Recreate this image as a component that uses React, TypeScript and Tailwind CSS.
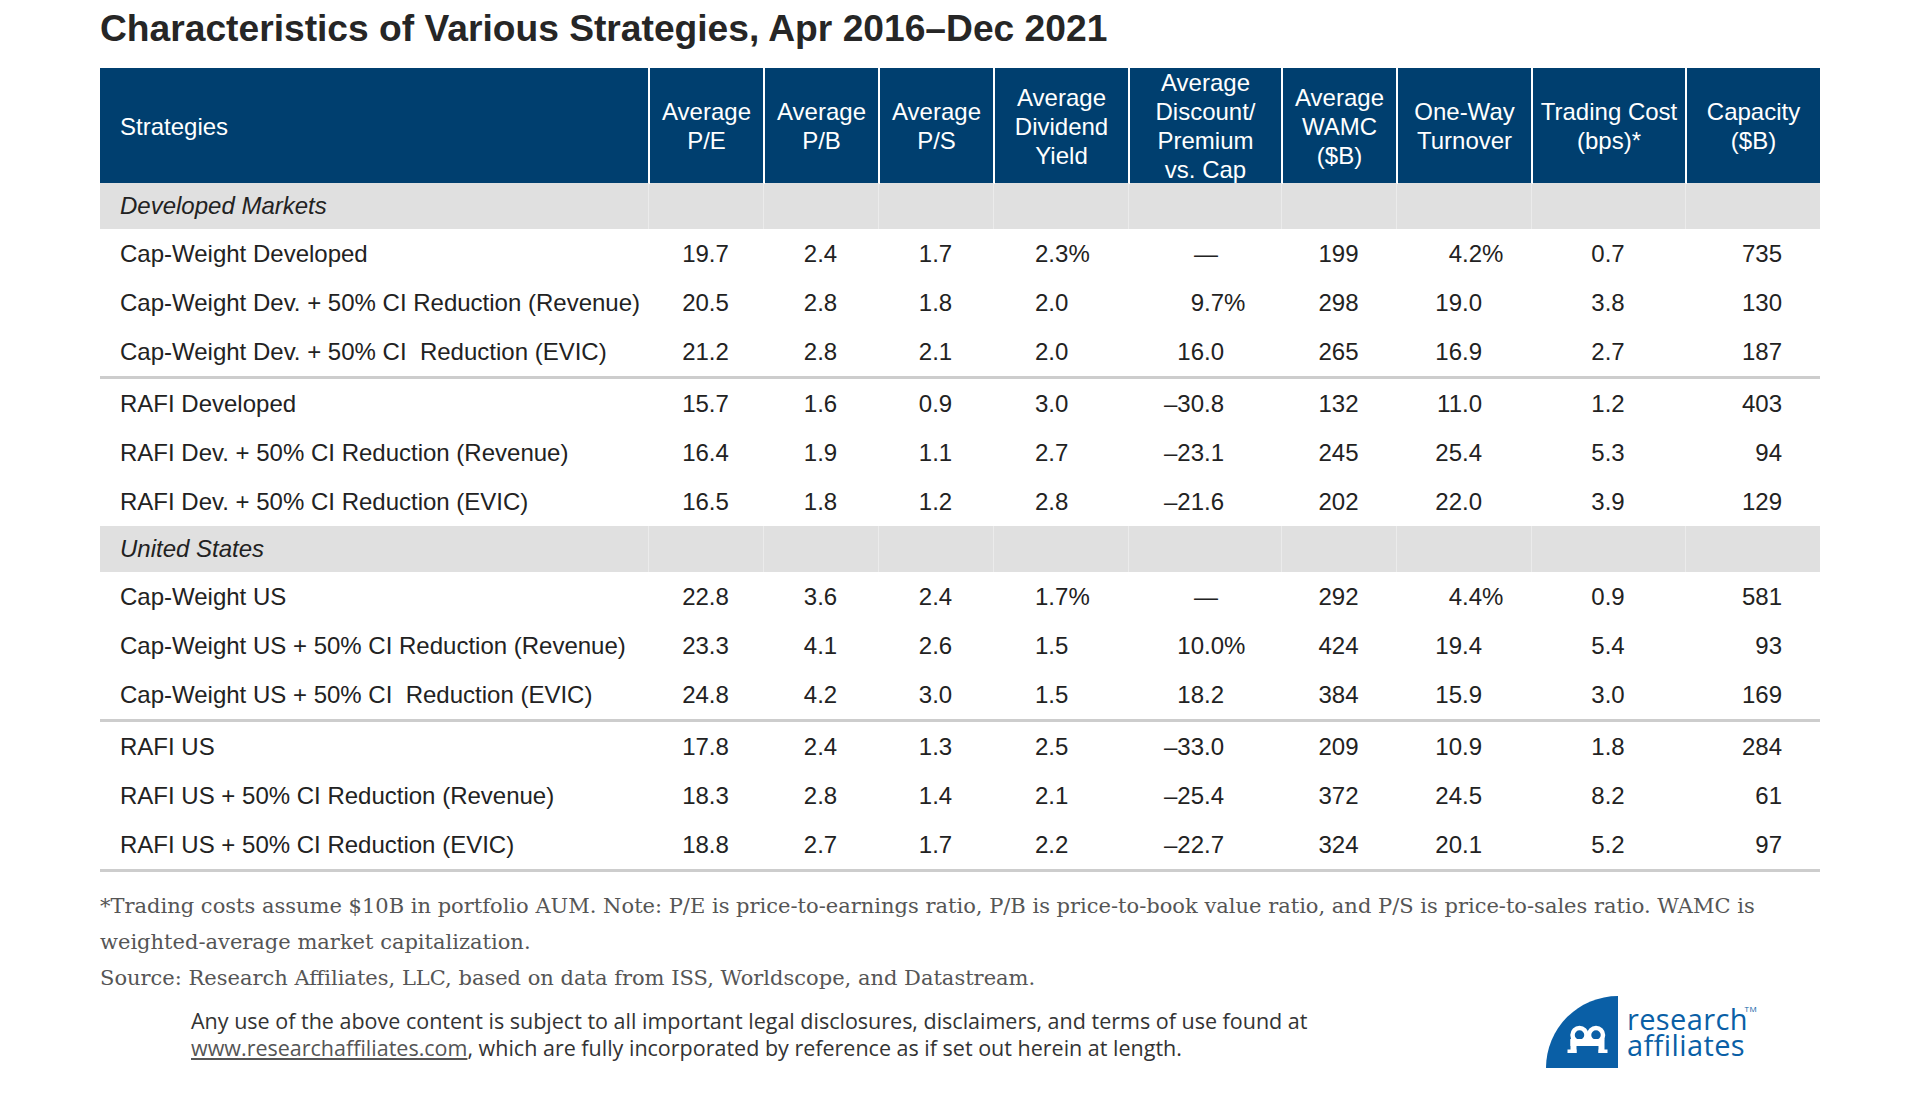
import React from "react";

type Row = string[];

const groups: { section: string; blocks: Row[][] }[] = [
  {
    section: "Developed Markets",
    blocks: [
      [
        ["Cap-Weight Developed", "19.7", "2.4", "1.7", "2.3%", "—", "199", "4.2%", "0.7", "735"],
        ["Cap-Weight Dev. + 50% CI Reduction (Revenue)", "20.5", "2.8", "1.8", "2.0", "9.7%", "298", "19.0", "3.8", "130"],
        ["Cap-Weight Dev. + 50% CI\u00a0 Reduction (EVIC)", "21.2", "2.8", "2.1", "2.0", "16.0", "265", "16.9", "2.7", "187"],
      ],
      [
        ["RAFI Developed", "15.7", "1.6", "0.9", "3.0", "–30.8", "132", "11.0", "1.2", "403"],
        ["RAFI Dev. + 50% CI Reduction (Revenue)", "16.4", "1.9", "1.1", "2.7", "–23.1", "245", "25.4", "5.3", "94"],
        ["RAFI Dev. + 50% CI Reduction (EVIC)", "16.5", "1.8", "1.2", "2.8", "–21.6", "202", "22.0", "3.9", "129"],
      ],
    ],
  },
  {
    section: "United States",
    blocks: [
      [
        ["Cap-Weight US", "22.8", "3.6", "2.4", "1.7%", "—", "292", "4.4%", "0.9", "581"],
        ["Cap-Weight US + 50% CI Reduction (Revenue)", "23.3", "4.1", "2.6", "1.5", "10.0%", "424", "19.4", "5.4", "93"],
        ["Cap-Weight US + 50% CI\u00a0 Reduction (EVIC)", "24.8", "4.2", "3.0", "1.5", "18.2", "384", "15.9", "3.0", "169"],
      ],
      [
        ["RAFI US", "17.8", "2.4", "1.3", "2.5", "–33.0", "209", "10.9", "1.8", "284"],
        ["RAFI US + 50% CI Reduction (Revenue)", "18.3", "2.8", "1.4", "2.1", "–25.4", "372", "24.5", "8.2", "61"],
        ["RAFI US + 50% CI Reduction (EVIC)", "18.8", "2.7", "1.7", "2.2", "–22.7", "324", "20.1", "5.2", "97"],
      ],
    ],
  },
];

const headers: string[][] = [
  ["Average", "P/E"],
  ["Average", "P/B"],
  ["Average", "P/S"],
  ["Average", "Dividend", "Yield"],
  ["Average", "Discount/", "Premium", "vs. Cap"],
  ["Average", "WAMC", "($B)"],
  ["One-Way", "Turnover"],
  ["Trading Cost", "(bps)*"],
  ["Capacity", "($B)"],
];

const GRID =
  "grid grid-cols-[548px_115px_115px_115px_135px_153px_115px_135px_154px_135px]";

function split(v: string): [string, string] {
  return v.endsWith("%") ? [v.slice(0, -1), "%"] : [v, ""];
}

function Cell({ v, i }: { v: string; i: number }) {
  if (i === 0) {
    return <div className="flex items-center pl-[20px] whitespace-pre">{v}</div>;
  }
  if (i === 4) {
    const [n, s] = split(v);
    return (
      <div className="flex items-center pl-[42px]">
        <span>{n}</span>
        <span>{s}</span>
      </div>
    );
  }
  if (i === 5 || i === 7) {
    const [n, s] = split(v);
    return (
      <div className={`flex items-center justify-end ${i === 5 ? "pr-[35px]" : "pr-[27px]"}`}>
        <span className={n === "—" ? "mr-[6px]" : ""}>{n}</span>
        <span className="w-[22px]">{s}</span>
      </div>
    );
  }
  if (i === 9) {
    return <div className="flex items-center justify-end pr-[38px]">{v}</div>;
  }
  return <div className="flex items-center justify-center">{v}</div>;
}

function SectionRow({ label }: { label: string }) {
  return (
    <div className={`${GRID} h-[46px] bg-[#e0e0e0]`}>
      <div className="flex items-center pl-[20px] italic">{label}</div>
      {headers.map((_, k) => (
        <div key={k} className="border-l border-[#ebebeb]" />
      ))}
    </div>
  );
}

function Logo() {
  return (
    <div className="flex items-start">
      <svg width="72" height="72" viewBox="0 0 72 72">
        <path d="M0 72 A72 72 0 0 1 72 0 L72 72 Z" fill="#0a5fa6" />
        <g fill="none" stroke="#ffffff" strokeWidth="4.5">
          <circle cx="33.5" cy="39" r="7" />
          <circle cx="50" cy="39" r="7" />
        </g>
        <g fill="#ffffff">
          <rect x="24.5" y="43" width="33.5" height="7" />
          <rect x="24.5" y="43" width="6" height="14" />
          <rect x="52.5" y="43" width="6" height="14" />
          <rect x="21.5" y="53.5" width="9" height="3.5" />
          <rect x="52.5" y="53.5" width="9" height="3.5" />
        </g>
      </svg>
      <div
        className="ml-[9px] mt-[10px] text-[#0a5fa6] text-[29px] leading-[26px] tracking-[0.4px]"
        style={{ fontFamily: '"Open Sans", "Noto Sans", sans-serif' }}
      >
        <div className="relative">
          research
          <span className="absolute -right-[9px] top-[-2px] text-[8px] leading-[10px]">TM</span>
        </div>
        <div>affiliates</div>
      </div>
    </div>
  );
}

export default function App() {
  return (
    <div
      className="w-[1920px] h-[1095px] bg-white pl-[100px] text-[#222222] overflow-hidden"
      style={{ fontFamily: '"Liberation Sans", Arial, sans-serif' }}
    >
      <div className="h-[68px] pt-[5px] text-[37.2px] leading-[46px] font-bold text-[#262626] whitespace-nowrap">
        Characteristics of Various Strategies, Apr 2016–Dec 2021
      </div>

      <div className="w-[1720px] text-[24px]">
        <div className={`${GRID} h-[115px] bg-[#003f6f] text-white leading-[29px]`}>
          <div className="flex items-center pl-[20px]">Strategies</div>
          {headers.map((h, k) => (
            <div key={k} className="flex flex-col items-center justify-center text-center border-l-2 border-white">
              {h.map((line, j) => (
                <span key={j} className="whitespace-nowrap">{line}</span>
              ))}
            </div>
          ))}
        </div>

        {groups.map((g, gi) => (
          <div key={gi}>
            <SectionRow label={g.section} />
            {g.blocks.map((block, bi) => (
              <div key={bi}>
                {block.map((row, ri) => (
                  <div key={ri} className={`${GRID} h-[49px]`}>
                    {row.map((v, ci) => (
                      <Cell key={ci} v={v} i={ci} />
                    ))}
                  </div>
                ))}
                {!(gi === 0 && bi === 1) && <div className="h-[3px] bg-[#cdcdcd]" />}
              </div>
            ))}
          </div>
        ))}
      </div>

      <div
        className="mt-[16px] text-[21px] leading-[36px] text-[#555555] whitespace-nowrap"
        style={{ fontFamily: '"DejaVu Serif", Georgia, serif' }}
      >
        <div>
          *Trading costs assume $10B in portfolio AUM. Note: P/E is price-to-earnings ratio, P/B is price-to-book value ratio, and P/S is price-to-sales ratio. WAMC is
        </div>
        <div>weighted-average market capitalization.</div>
        <div>Source: Research Affiliates, LLC, based on data from ISS, Worldscope, and Datastream.</div>
      </div>

      <div className="w-[1720px] flex justify-between">
        <div
          className="pl-[91px] pt-[11px] text-[21.5px] leading-[27px] text-[#333333] whitespace-nowrap"
          style={{ fontFamily: '"Open Sans", "Noto Sans", sans-serif' }}
        >
          <div>
            Any use of the above content is subject to all important legal disclosures, disclaimers, and terms of use found at
          </div>
          <div>
            <span className="underline text-[#555555]">www.researchaffiliates.com</span>, which are fully incorporated by reference as if set out herein at length.
          </div>
        </div>
        <div className="mr-[72px]">
          <Logo />
        </div>
      </div>
    </div>
  );
}
